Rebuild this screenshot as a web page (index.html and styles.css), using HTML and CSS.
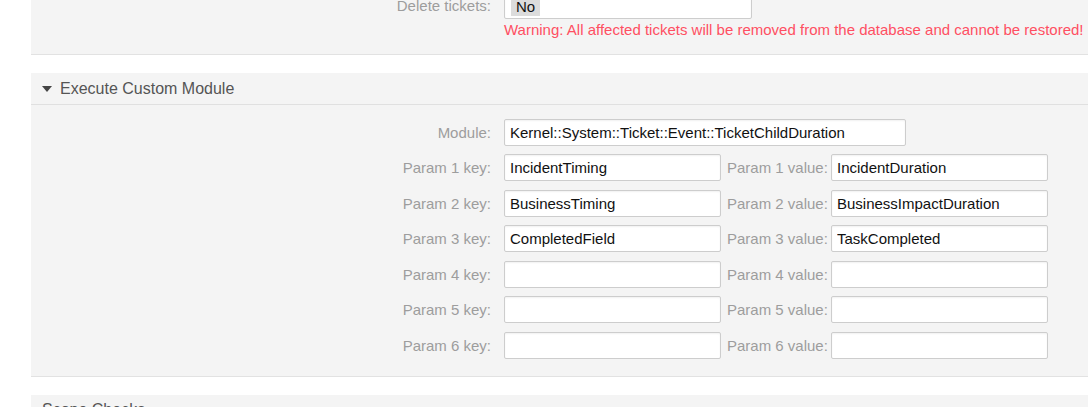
FILE: index.html
```html
<!DOCTYPE html>
<html>
<head>
<meta charset="utf-8">
<link rel="stylesheet" href="styles.css">
</head>
<body>
<div class="page">
  <section class="widget top-widget">
    <div class="content">
      <div class="row">
        <label class="lbl">Delete tickets:</label>
        <div class="field select-field"><span class="chip">No</span></div>
      </div>
      <div class="warning">Warning: All affected tickets will be removed from the database and cannot be restored!</div>
    </div>
  </section>

  <section class="widget">
    <div class="header"><span class="tri"></span>Execute Custom Module</div>
    <div class="content rows">
      <div class="row">
        <label class="lbl">Module:</label>
        <input class="field module" value="Kernel::System::Ticket::Event::TicketChildDuration">
      </div>
      <div class="row">
        <label class="lbl">Param 1 key:</label>
        <input class="field key" value="IncidentTiming">
        <label class="vlbl">Param 1 value:</label>
        <input class="field key" value="IncidentDuration">
      </div>
      <div class="row">
        <label class="lbl">Param 2 key:</label>
        <input class="field key" value="BusinessTiming">
        <label class="vlbl">Param 2 value:</label>
        <input class="field key" value="BusinessImpactDuration">
      </div>
      <div class="row">
        <label class="lbl">Param 3 key:</label>
        <input class="field key" value="CompletedField">
        <label class="vlbl">Param 3 value:</label>
        <input class="field key" value="TaskCompleted">
      </div>
      <div class="row">
        <label class="lbl">Param 4 key:</label>
        <input class="field key" value="">
        <label class="vlbl">Param 4 value:</label>
        <input class="field key" value="">
      </div>
      <div class="row">
        <label class="lbl">Param 5 key:</label>
        <input class="field key" value="">
        <label class="vlbl">Param 5 value:</label>
        <input class="field key" value="">
      </div>
      <div class="row">
        <label class="lbl">Param 6 key:</label>
        <input class="field key" value="">
        <label class="vlbl">Param 6 value:</label>
        <input class="field key" value="">
      </div>
    </div>
  </section>

  <section class="widget">
    <div class="header plain">Scope Checks</div>
  </section>
</div>
</body>
</html>
```

FILE: styles.css
```css
html, body {
  margin: 0;
  padding: 0;
  background: #fff;
  overflow: hidden;
}
body {
  font-family: "Liberation Sans", Arial, sans-serif;
  font-size: 15px;
  width: 1088px;
  height: 407px;
}
.page {
  padding-left: 31px;
  margin-top: -8px;
  display: flex;
  flex-direction: column;
  gap: 18px;
}
.widget {
  background: #f4f4f4;
  border-bottom: 1px solid #e2e2e2;
}
.top-widget .content {
  padding: 0 0 16px 0;
}
.header {
  height: 31px;
  border-bottom: 1px solid #e0e0e0;
  display: flex;
  align-items: center;
  padding-left: 11px;
  font-size: 16px;
  color: #555;
}
.header.plain {
  padding-left: 11px;
}
.tri {
  width: 0;
  height: 0;
  border-left: 5.5px solid transparent;
  border-right: 5.5px solid transparent;
  border-top: 6px solid #444;
  margin-right: 8px;
  margin-top: 1px;
}
.rows {
  padding: 14px 0 17px 0;
  display: flex;
  flex-direction: column;
  gap: 8.45px;
}
.row {
  display: flex;
  align-items: center;
}
.lbl {
  width: 460px;
  text-align: right;
  color: #9d9d9d;
  margin-right: 13px;
  white-space: nowrap;
}
.vlbl {
  width: 99px;
  margin-left: 6px;
  margin-right: 5px;
  color: #9d9d9d;
  white-space: nowrap;
}
.field {
  box-sizing: border-box;
  height: 27px;
  border: 1px solid #cdcdcd;
  border-radius: 2px;
  background: #fff;
  box-shadow: inset 0 1px 2px rgba(0,0,0,0.06);
  font-family: "Liberation Sans", Arial, sans-serif;
  font-size: 15px;
  color: #111;
  padding: 0 5px;
  margin: 0;
  outline: none;
}
.module { width: 402px; }
.key { width: 217px; }
.select-field {
  width: 248px;
  display: flex;
  align-items: center;
  padding: 0 6px;
}
.chip {
  background: #dcdcdc;
  color: #111;
  padding: 0 5px 0 5px;
  line-height: 18px;
  margin-top: 3px;
}
.warning {
  margin-left: 473px;
  margin-top: 2px;
  color: #ff4f62;
  white-space: nowrap;
  line-height: 17px;
}
```
